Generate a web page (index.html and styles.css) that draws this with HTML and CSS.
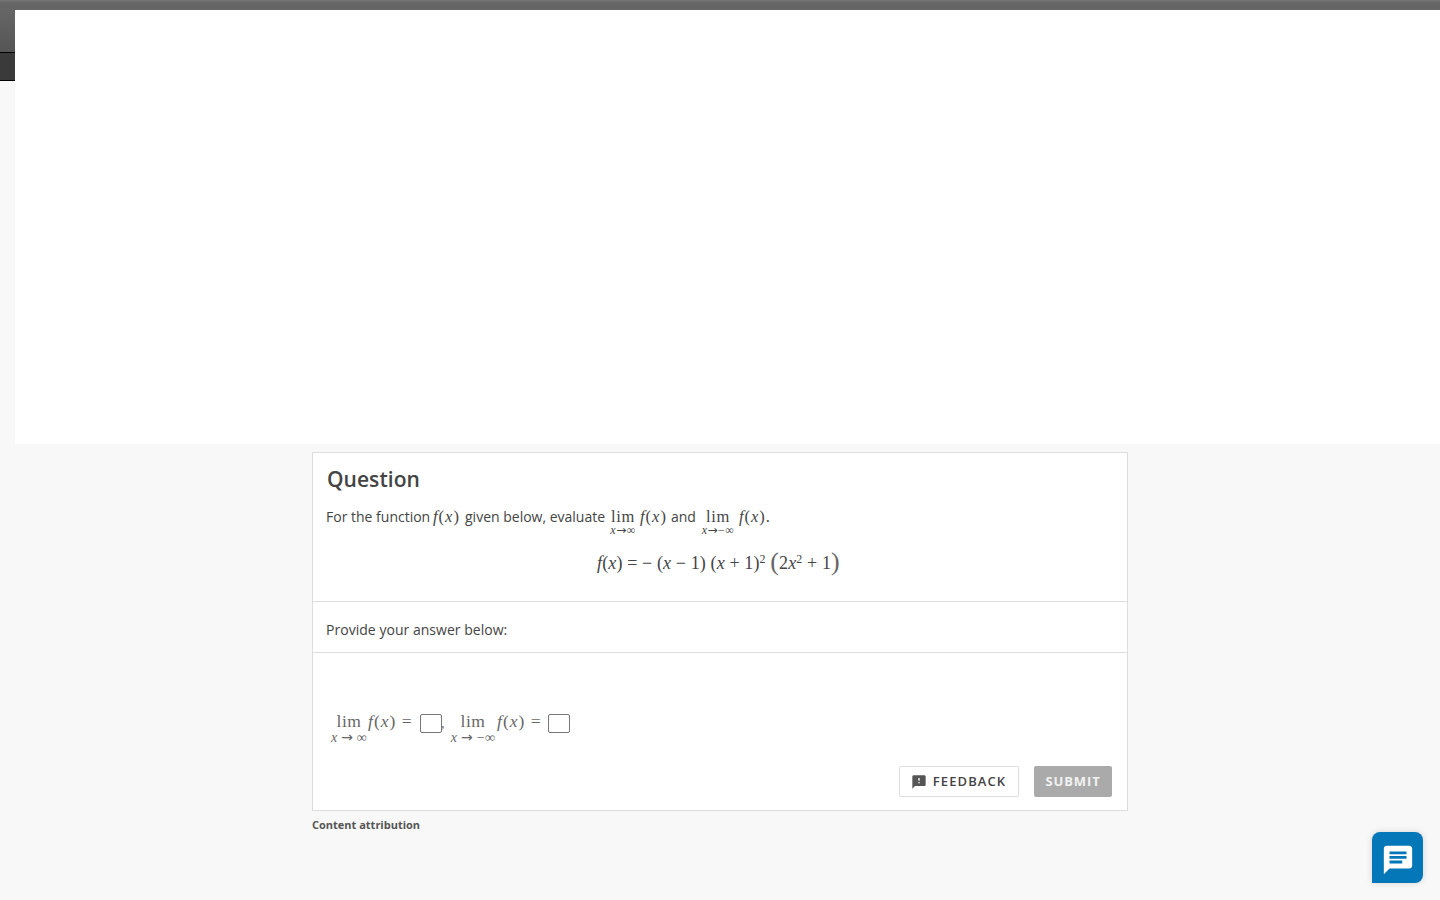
FILE: index.html
```html
<!DOCTYPE html>
<html lang="en">
<head>
<meta charset="utf-8">
<title>Question</title>
<link rel="stylesheet" href="styles.css">
</head>
<body>
<div class="topbar"></div>
<div class="stage">
  <div class="strip">
    <div class="strip-a"></div>
    <div class="strip-b"></div>
  </div>
  <div class="panel"></div>
</div>
<main class="wrap">
  <section class="card">
    <div class="q">
      <h1 class="title">Question</h1>
      <div class="prompt">
        <span class="t1">For the function</span>
        <span class="m m1"><i>f</i>(<i>x</i>)</span>
        <span class="t2">given below, evaluate</span>
        <span class="lim l1"><span class="lim-w">lim</span><span class="lim-s"><i>x</i><span class="arr">→</span>∞</span></span>
        <span class="m m2"><i>f</i>(<i>x</i>)</span>
        <span class="t3">and</span>
        <span class="lim l2"><span class="lim-w">lim</span><span class="lim-s"><i>x</i><span class="arr">→</span>−∞</span></span>
        <span class="m m3"><i>f</i>(<i>x</i>).</span>
      </div>
      <div class="equation"><i>f</i>(<i>x</i>) = − (<i>x</i> − 1) (<i>x</i> + 1)<sup>2</sup> <span class="big">(</span>2<i>x</i><sup>2</sup> + 1<span class="big">)</span></div>
    </div>
    <div class="provide">Provide your answer below:</div>
    <div class="answer">
      <div class="answer-math">
        <span class="alim a1"><span class="alim-w">lim</span><span class="alim-s"><i>x</i> <span class="arr">→</span> ∞</span></span>
        <span class="am am1"><i>f</i>(<i>x</i>) =</span>
        <span class="box"></span>
        <span class="comma">,</span>
        <span class="alim a2"><span class="alim-w">lim</span><span class="alim-s"><i>x</i> <span class="arr">→</span> −∞</span></span>
        <span class="am am2"><i>f</i>(<i>x</i>) =</span>
        <span class="box box2"></span>
      </div>
      <div class="actions">
        <button class="btn-feedback" type="button">
          <svg class="fb-icon" viewBox="0 0 24 24" width="16" height="16"><path fill="#555" d="M20 2H4c-1.100 0-2 .9-2 2v18l4-4h14c1.100 0 2-.9 2-2V4c0-1.100-.9-2-2-2zm-7 12h-2v-2h2v2zm0-4h-2V6h2v4z"/></svg>
          FEEDBACK
        </button>
        <button class="btn-submit" type="button">SUBMIT</button>
      </div>
    </div>
  </section>
  <div class="attrib">Content attribution</div>
</main>
<button class="chat" type="button" aria-label="Chat">
  <svg viewBox="0 0 24 24" width="34" height="34"><path fill="#fff" d="M20 2H4c-1.100 0-2 .9-2 2v18l4-4h14c1.100 0 2-.9 2-2V4c0-1.100-.9-2-2-2z"/><path fill="#0377b8" d="M6 6h12v2H6zM6 9.200h12v2H6zM6 12.400h9v2H6z"/></svg>
</button>
</body>
</html>
```
FILE: styles.css
```css
* { box-sizing: border-box; }
html, body { margin: 0; height: 900px; overflow: hidden; }
body { background: #f8f8f8; font-family: "Open Sans", sans-serif; color: #444; position: relative; }
i { font-style: italic; }
.arr { font-family: "DejaVu Sans", sans-serif; }

.topbar { height: 10px; background: linear-gradient(#777, #666 30%, #666); }
.stage { display: flex; height: 434px; }
.strip { width: 15px; flex: none; }
.strip-a { height: 42px; background: linear-gradient(#666, #555); }
.strip-b { height: 29px; background: #3a3a3a; border-top: 1px solid #000; border-bottom: 1px solid #000; }
.panel { flex: 1; background: #fff; }

.wrap { width: 816px; margin: 8px auto 0; }
.card { background: #fff; border: 1px solid #ddd; height: 359px; display: flex; flex-direction: column; }
.q { height: 149px; padding: 13px 13px 0; border-bottom: 1px solid #ddd; }
.title { margin: 0; font-size: 21px; line-height: 27px; font-weight: 600; color: #444; letter-spacing: .05px; padding-left: 1px; }

.prompt { display: flex; align-items: flex-start; height: 32px; margin-top: 13px; font-size: 14px; line-height: 22px; color: #444; }
.t1 { width: 106px; }
.t2 { margin-left: 5px; width: 141px; }
.t3 { margin-left: 5px; }
.m { font-family: "Liberation Serif", serif; font-size: 16.500px; line-height: 22px; color: #444; letter-spacing: 1px; white-space: nowrap; }
.m1 { width: 28px; padding-left: 1px; }
.m2 { margin-left: 3px; width: 26px; }
.m3 { margin-left: 3px; }
.lim { display: flex; flex-direction: column; align-items: center; width: 28px; margin-left: 3px; font-family: "Liberation Serif", serif; color: #444; }
.l2 { margin-left: 4px; width: 36px; }
.lim-w { font-size: 16.500px; line-height: 18px; margin-top: 2px; letter-spacing: .6px; }
.lim-s { font-size: 12px; line-height: 8px; letter-spacing: .45px; white-space: nowrap; }

.equation { margin-top: 12px; text-align: center; font-family: "Liberation Serif", serif; font-size: 18px; line-height: 26px; color: #444; padding-right: 3px; letter-spacing: .12px; white-space: nowrap; }
.equation sup { font-size: 12px; line-height: 0; vertical-align: 6px; }
.big { font-size: 26px; line-height: 0; color: #666; vertical-align: -1px; }

.provide { height: 51px; padding: 17px 13px 0; font-size: 14px; line-height: 22px; letter-spacing: .03px; border-bottom: 1px solid #ddd; }

.answer { flex: 1; position: relative; display: flex; flex-direction: column; }
.answer-math { display: flex; align-items: flex-start; margin-top: 57px; padding-left: 17px; font-family: "Liberation Serif", serif; color: #666; height: 42px; }
.alim { display: flex; flex-direction: column; align-items: center; width: 38px; }
.a2 { width: 48px; margin-left: 2px; }
.alim-w { font-size: 17.500px; line-height: 18px; margin-top: 2px; letter-spacing: .5px; }
.alim-s { font-size: 14px; line-height: 12px; margin-top: 1px; white-space: nowrap; letter-spacing: .25px; }
.am { font-size: 17.500px; line-height: 22px; letter-spacing: 1px; white-space: nowrap; }
.am1 { width: 52px; }
.am2 { width: 51px; }
.box { width: 22px; height: 19px; margin-top: 4px; border: 1px solid #777; border-radius: 2px; background: #fff; }
.comma { font-size: 14px; line-height: 26px; margin-top: 1px; width: 5px; margin-left: -1px; margin-right: 1px; }

.actions { display: flex; justify-content: flex-end; align-items: center; gap: 15px; padding-right: 15px; margin-top: 14px; }
.btn-feedback, .btn-submit { font-family: "Open Sans", sans-serif; font-size: 13px; font-weight: 600; height: 31px; border-radius: 2px; }
.btn-feedback { width: 120px; padding: 0 1px 2px 0; letter-spacing: 1.100px; background: #fff; border: 1px solid #ddd; color: #444; display: flex; align-items: center; justify-content: center; gap: 6px; }
.fb-icon { flex: none; position: relative; top: 1px; }
.btn-submit { width: 78px; padding: 0 0 2px; background: #aaa; border: 0; color: #f2f2f2; letter-spacing: .9px; font-weight: 700; }

.attrib { margin-top: 7px; font-size: 11px; line-height: 14px; font-weight: 700; color: #555; }

.chat { position: absolute; left: 1372px; top: 832px; width: 51px; height: 51px; padding: 4px 0 0; border: 0; background: #0377b8; border-radius: 8px 8px 8px 0; display: flex; align-items: center; justify-content: center; box-shadow: 0 0 6px rgba(0,0,0,.15); }
```
